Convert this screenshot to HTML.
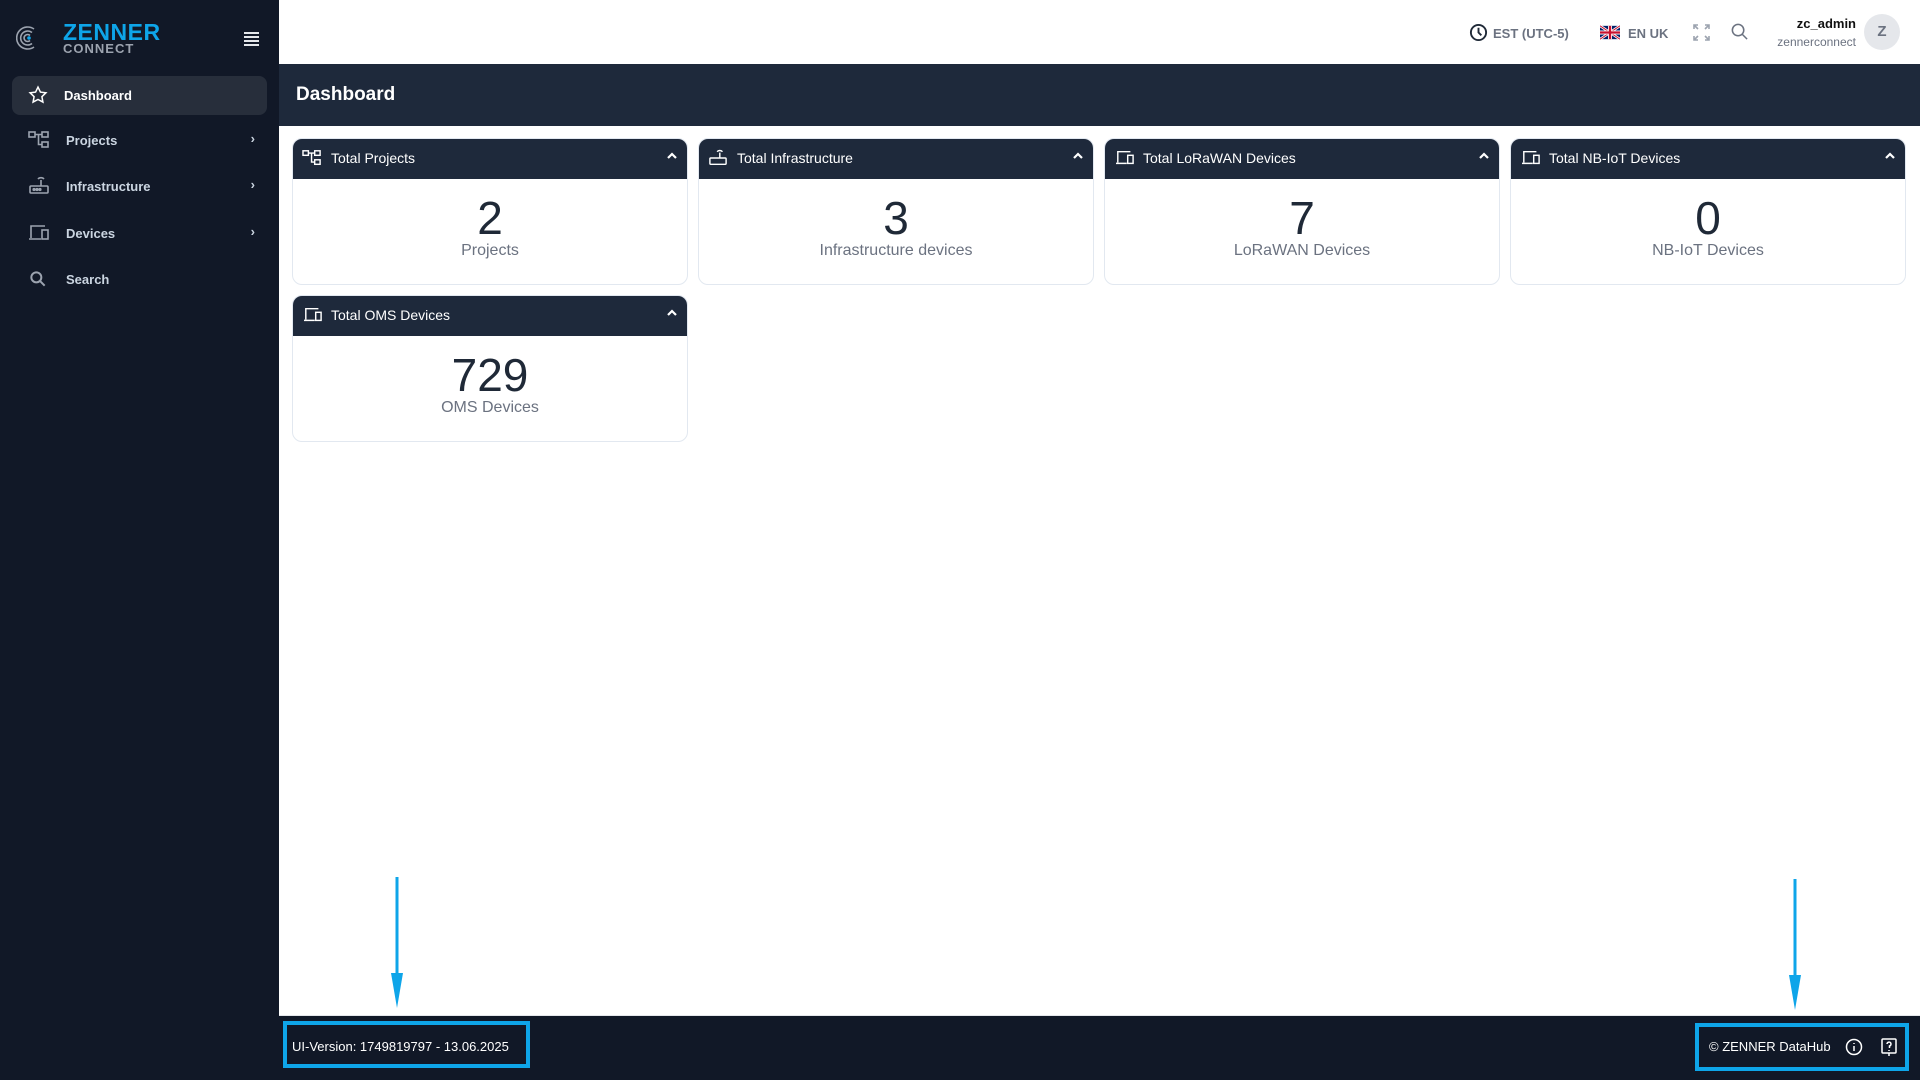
<!DOCTYPE html>
<html><head><meta charset="utf-8"><style>
*{box-sizing:border-box;margin:0;padding:0}
body{width:1920px;height:1080px;position:relative;overflow:hidden;background:#fff;font-family:"Liberation Sans",sans-serif}
.side{position:absolute;left:0;top:0;width:279px;height:1080px;background:#111827}
.abs{position:absolute}
.nav{position:absolute;left:12px;width:255px;height:39px;border-radius:8px;color:#cbd5e1;font-size:13px;font-weight:bold}
.nav .ic{position:absolute;left:16px;top:9px}
.nav .tx{position:absolute;left:54px;top:12px}
.nav .ch{position:absolute;right:12px;top:10px;font-size:13px}
.card{position:absolute;width:396px;height:147px;border:1px solid #e2e8f0;border-radius:10px;overflow:hidden;background:#fff}
.card .hd{height:40px;background:#1e293b;color:#fff;font-size:14px;position:relative}
.card .hd .ic{position:absolute;left:9px;top:10px}
.card .hd .t{position:absolute;left:38px;top:11px}
.card .hd .up{position:absolute;right:9px;top:12px}
.card .n{position:absolute;top:55px;width:100%;text-align:center;font-size:46px;color:#1f2937;line-height:48px}
.card .l{position:absolute;top:103px;width:100%;text-align:center;font-size:16px;color:#6b7280}
</style></head><body>
<div class="side">
  <svg class="abs" style="left:16px;top:25px" width="24" height="26" viewBox="0 0 24 26" fill="none" stroke="#9ca3af" stroke-width="1.6"><path d="M18 4A11 11 0 1 0 18 22"/><path d="M16 7.5A7 7 0 1 0 16 18.5"/><path d="M14 10.5A3.5 3.5 0 1 0 14 15.5"/><circle cx="13" cy="13" r="1.8" fill="#0ea5e9" stroke="none"/></svg>
  <div class="abs" style="left:63px;top:19px;color:#0ea5e9;font-size:23px;font-weight:900;letter-spacing:0.5px">ZENNER</div>
  <div class="abs" style="left:63px;top:41px;color:#9ca3af;font-size:13px;font-weight:bold;letter-spacing:1px">CONNECT</div>
  <div class="abs" style="left:244px;top:32px;width:15px"><div style="height:2px;background:#e5e7eb;margin-bottom:2px"></div><div style="height:2px;background:#e5e7eb;margin-bottom:2px"></div><div style="height:2px;background:#e5e7eb;margin-bottom:2px"></div><div style="height:2px;background:#e5e7eb"></div></div>
  <div class="nav" style="top:76px;background:#272e3b;color:#fff"><svg class="ic" width="20" height="20" viewBox="0 0 24 24" fill="none" stroke="#fff" stroke-width="1.8"><path d="M12 2.5l2.9 6 6.6.9-4.8 4.6 1.2 6.5L12 17.4l-5.9 3.1 1.2-6.5L2.5 9.4l6.6-.9z"/></svg><span class="tx" style="left:52px">Dashboard</span></div>
  <div class="nav" style="top:121px"><svg class="ic" width="22" height="20" viewBox="0 0 22 20" fill="none" stroke="#9ca3af" stroke-width="1.6"><rect x="1" y="2" width="6" height="5"/><rect x="14" y="2" width="6" height="5"/><rect x="14" y="12" width="6" height="5"/><path d="M7 4.5h7M10.5 4.5v10h3.5"/></svg><span class="tx">Projects</span><span class="ch">›</span></div>
  <div class="nav" style="top:167px"><svg class="ic" width="22" height="20" viewBox="0 0 22 20" fill="none" stroke="#9ca3af" stroke-width="1.6"><rect x="2" y="10" width="18" height="7" rx="1"/><path d="M13 10V4M10 3a4 4 0 0 1 6 0"/><circle cx="6" cy="13.5" r=".8" fill="#9ca3af"/><circle cx="9" cy="13.5" r=".8" fill="#9ca3af"/><circle cx="12" cy="13.5" r=".8" fill="#9ca3af"/></svg><span class="tx">Infrastructure</span><span class="ch">›</span></div>
  <div class="nav" style="top:214px"><svg class="ic" width="22" height="20" viewBox="0 0 22 20" fill="none" stroke="#9ca3af" stroke-width="1.6"><path d="M3 15V3h14M1 16h12"/><rect x="14" y="7" width="6" height="9"/></svg><span class="tx">Devices</span><span class="ch">›</span></div>
  <div class="nav" style="top:260px"><svg class="ic" width="20" height="20" viewBox="0 0 24 24" fill="none" stroke="#9ca3af" stroke-width="2.4"><circle cx="10" cy="10" r="6"/><path d="M14.5 14.5L20 20"/></svg><span class="tx">Search</span></div>
</div>
<svg class="abs" style="left:1469px;top:23px" width="19" height="19" viewBox="0 0 20 20" fill="none" stroke="#1f2937" stroke-width="2"><circle cx="10" cy="10" r="8"/><path d="M10 5v5l3 3"/></svg>
<div class="abs" style="left:1493px;top:26px;font-size:13px;color:#6b7280;font-weight:bold">EST (UTC-5)</div>
<svg class="abs" style="left:1600px;top:25px" width="20" height="15" viewBox="0 0 60 40"><rect width="60" height="40" fill="#012169"/><path d="M0 0L60 40M60 0L0 40" stroke="#fff" stroke-width="8"/><path d="M0 0L60 40M60 0L0 40" stroke="#C8102E" stroke-width="3"/><path d="M30 0v40M0 20h60" stroke="#fff" stroke-width="12"/><path d="M30 0v40M0 20h60" stroke="#C8102E" stroke-width="7"/></svg>
<div class="abs" style="left:1628px;top:26px;font-size:13px;color:#6b7280;font-weight:bold">EN UK</div>
<svg class="abs" style="left:1693px;top:24px" width="17" height="17" viewBox="0 0 17 17" fill="none" stroke="#9ca3af" stroke-width="1.6"><path d="M1 5V1h4M12 1h4v4M16 12v4h-4M5 16H1v-4M1 1l4 4M16 1l-4 4M16 16l-4-4M1 16l4-4"/></svg>
<svg class="abs" style="left:1730px;top:22px" width="19" height="19" viewBox="0 0 20 20" fill="none" stroke="#6b7280" stroke-width="1.6"><circle cx="8.5" cy="8.5" r="6"/><path d="M13 13l5 5"/></svg>
<div class="abs" style="right:64px;top:16px;font-size:13px;color:#111;font-weight:bold;text-align:right">zc_admin</div>
<div class="abs" style="right:64px;top:35px;font-size:12px;color:#6b7280;text-align:right">zennerconnect</div>
<div class="abs" style="left:1864px;top:14px;width:36px;height:36px;border-radius:50%;background:#e5e7eb;color:#6b7280;font-size:15px;font-weight:bold;text-align:center;line-height:36px">Z</div>
<div class="abs" style="left:279px;top:64px;width:1641px;height:62px;background:#1e293b"></div>
<div class="abs" style="left:296px;top:84px;color:#fff;font-size:19px;font-weight:bold">Dashboard</div>
<div class="card" style="left:292px;top:138px"><div class="hd"><svg class="ic" width="20" height="18" viewBox="0 0 22 20" fill="none" stroke="#fff" stroke-width="1.6"><rect x="1" y="2" width="6" height="5"/><rect x="14" y="2" width="6" height="5"/><rect x="14" y="12" width="6" height="5"/><path d="M7 4.5h7M10.5 4.5v10h3.5"/></svg><span class="t">Total Projects</span><svg class="up" width="12" height="10" viewBox="0 0 12 10" fill="none" stroke="#fff" stroke-width="2.2"><path d="M2 7l4-4 4 4"/></svg></div><div class="n">2</div><div class="l">Projects</div></div>
<div class="card" style="left:698px;top:138px"><div class="hd"><svg class="ic" width="20" height="18" viewBox="0 0 22 20" fill="none" stroke="#fff" stroke-width="1.6"><rect x="2" y="10" width="18" height="7" rx="1"/><path d="M13 10V4M10 3a4 4 0 0 1 6 0"/></svg><span class="t">Total Infrastructure</span><svg class="up" width="12" height="10" viewBox="0 0 12 10" fill="none" stroke="#fff" stroke-width="2.2"><path d="M2 7l4-4 4 4"/></svg></div><div class="n">3</div><div class="l">Infrastructure devices</div></div>
<div class="card" style="left:1104px;top:138px"><div class="hd"><svg class="ic" width="22" height="18" viewBox="0 0 22 20" fill="none" stroke="#fff" stroke-width="1.6"><path d="M3 15V3h14M1 16h12"/><rect x="14" y="7" width="6" height="9"/></svg><span class="t">Total LoRaWAN Devices</span><svg class="up" width="12" height="10" viewBox="0 0 12 10" fill="none" stroke="#fff" stroke-width="2.2"><path d="M2 7l4-4 4 4"/></svg></div><div class="n">7</div><div class="l">LoRaWAN Devices</div></div>
<div class="card" style="left:1510px;top:138px"><div class="hd"><svg class="ic" width="22" height="18" viewBox="0 0 22 20" fill="none" stroke="#fff" stroke-width="1.6"><path d="M3 15V3h14M1 16h12"/><rect x="14" y="7" width="6" height="9"/></svg><span class="t">Total NB-IoT Devices</span><svg class="up" width="12" height="10" viewBox="0 0 12 10" fill="none" stroke="#fff" stroke-width="2.2"><path d="M2 7l4-4 4 4"/></svg></div><div class="n">0</div><div class="l">NB-IoT Devices</div></div>
<div class="card" style="left:292px;top:295px"><div class="hd"><svg class="ic" width="22" height="18" viewBox="0 0 22 20" fill="none" stroke="#fff" stroke-width="1.6"><path d="M3 15V3h14M1 16h12"/><rect x="14" y="7" width="6" height="9"/></svg><span class="t">Total OMS Devices</span><svg class="up" width="12" height="10" viewBox="0 0 12 10" fill="none" stroke="#fff" stroke-width="2.2"><path d="M2 7l4-4 4 4"/></svg></div><div class="n">729</div><div class="l">OMS Devices</div></div>
<svg class="abs" style="left:380px;top:875px" width="40" height="140"><path d="M17 2V100" stroke="#0ea5e9" stroke-width="3"/><path d="M11 98h12l-6 35z" fill="#0ea5e9"/></svg>
<svg class="abs" style="left:1778px;top:877px" width="40" height="140"><path d="M17 2V100" stroke="#0ea5e9" stroke-width="3"/><path d="M11 98h12l-6 35z" fill="#0ea5e9"/></svg>
<div class="abs" style="left:279px;top:1015px;width:1641px;height:65px;background:#111827;border-top:1px solid #e5e7eb"></div>
<div class="abs" style="left:283px;top:1021px;width:247px;height:47px;border:4px solid #0ea5e9"></div>
<div class="abs" style="left:292px;top:1039px;color:#fff;font-size:13px">UI-Version: 1749819797 - 13.06.2025</div>
<div class="abs" style="left:1695px;top:1023px;width:214px;height:48px;border:4px solid #0ea5e9"></div>
<div class="abs" style="left:1709px;top:1039px;color:#fff;font-size:13px">© ZENNER DataHub</div>
<svg class="abs" style="left:1845px;top:1038px" width="18" height="18" viewBox="0 0 18 18" fill="none" stroke="#fff" stroke-width="1.5"><circle cx="9" cy="9" r="7.5"/><path d="M9 8v5M9 5v1"/></svg>
<svg class="abs" style="left:1881px;top:1038px" width="16" height="19" viewBox="0 0 16 19" fill="none" stroke="#fff" stroke-width="1.5"><rect x="1" y="1" width="14" height="14" rx="1"/><path d="M6 6a2 2 0 1 1 2.5 2v2M8 12v1M8 15v3"/></svg>
</body></html>
